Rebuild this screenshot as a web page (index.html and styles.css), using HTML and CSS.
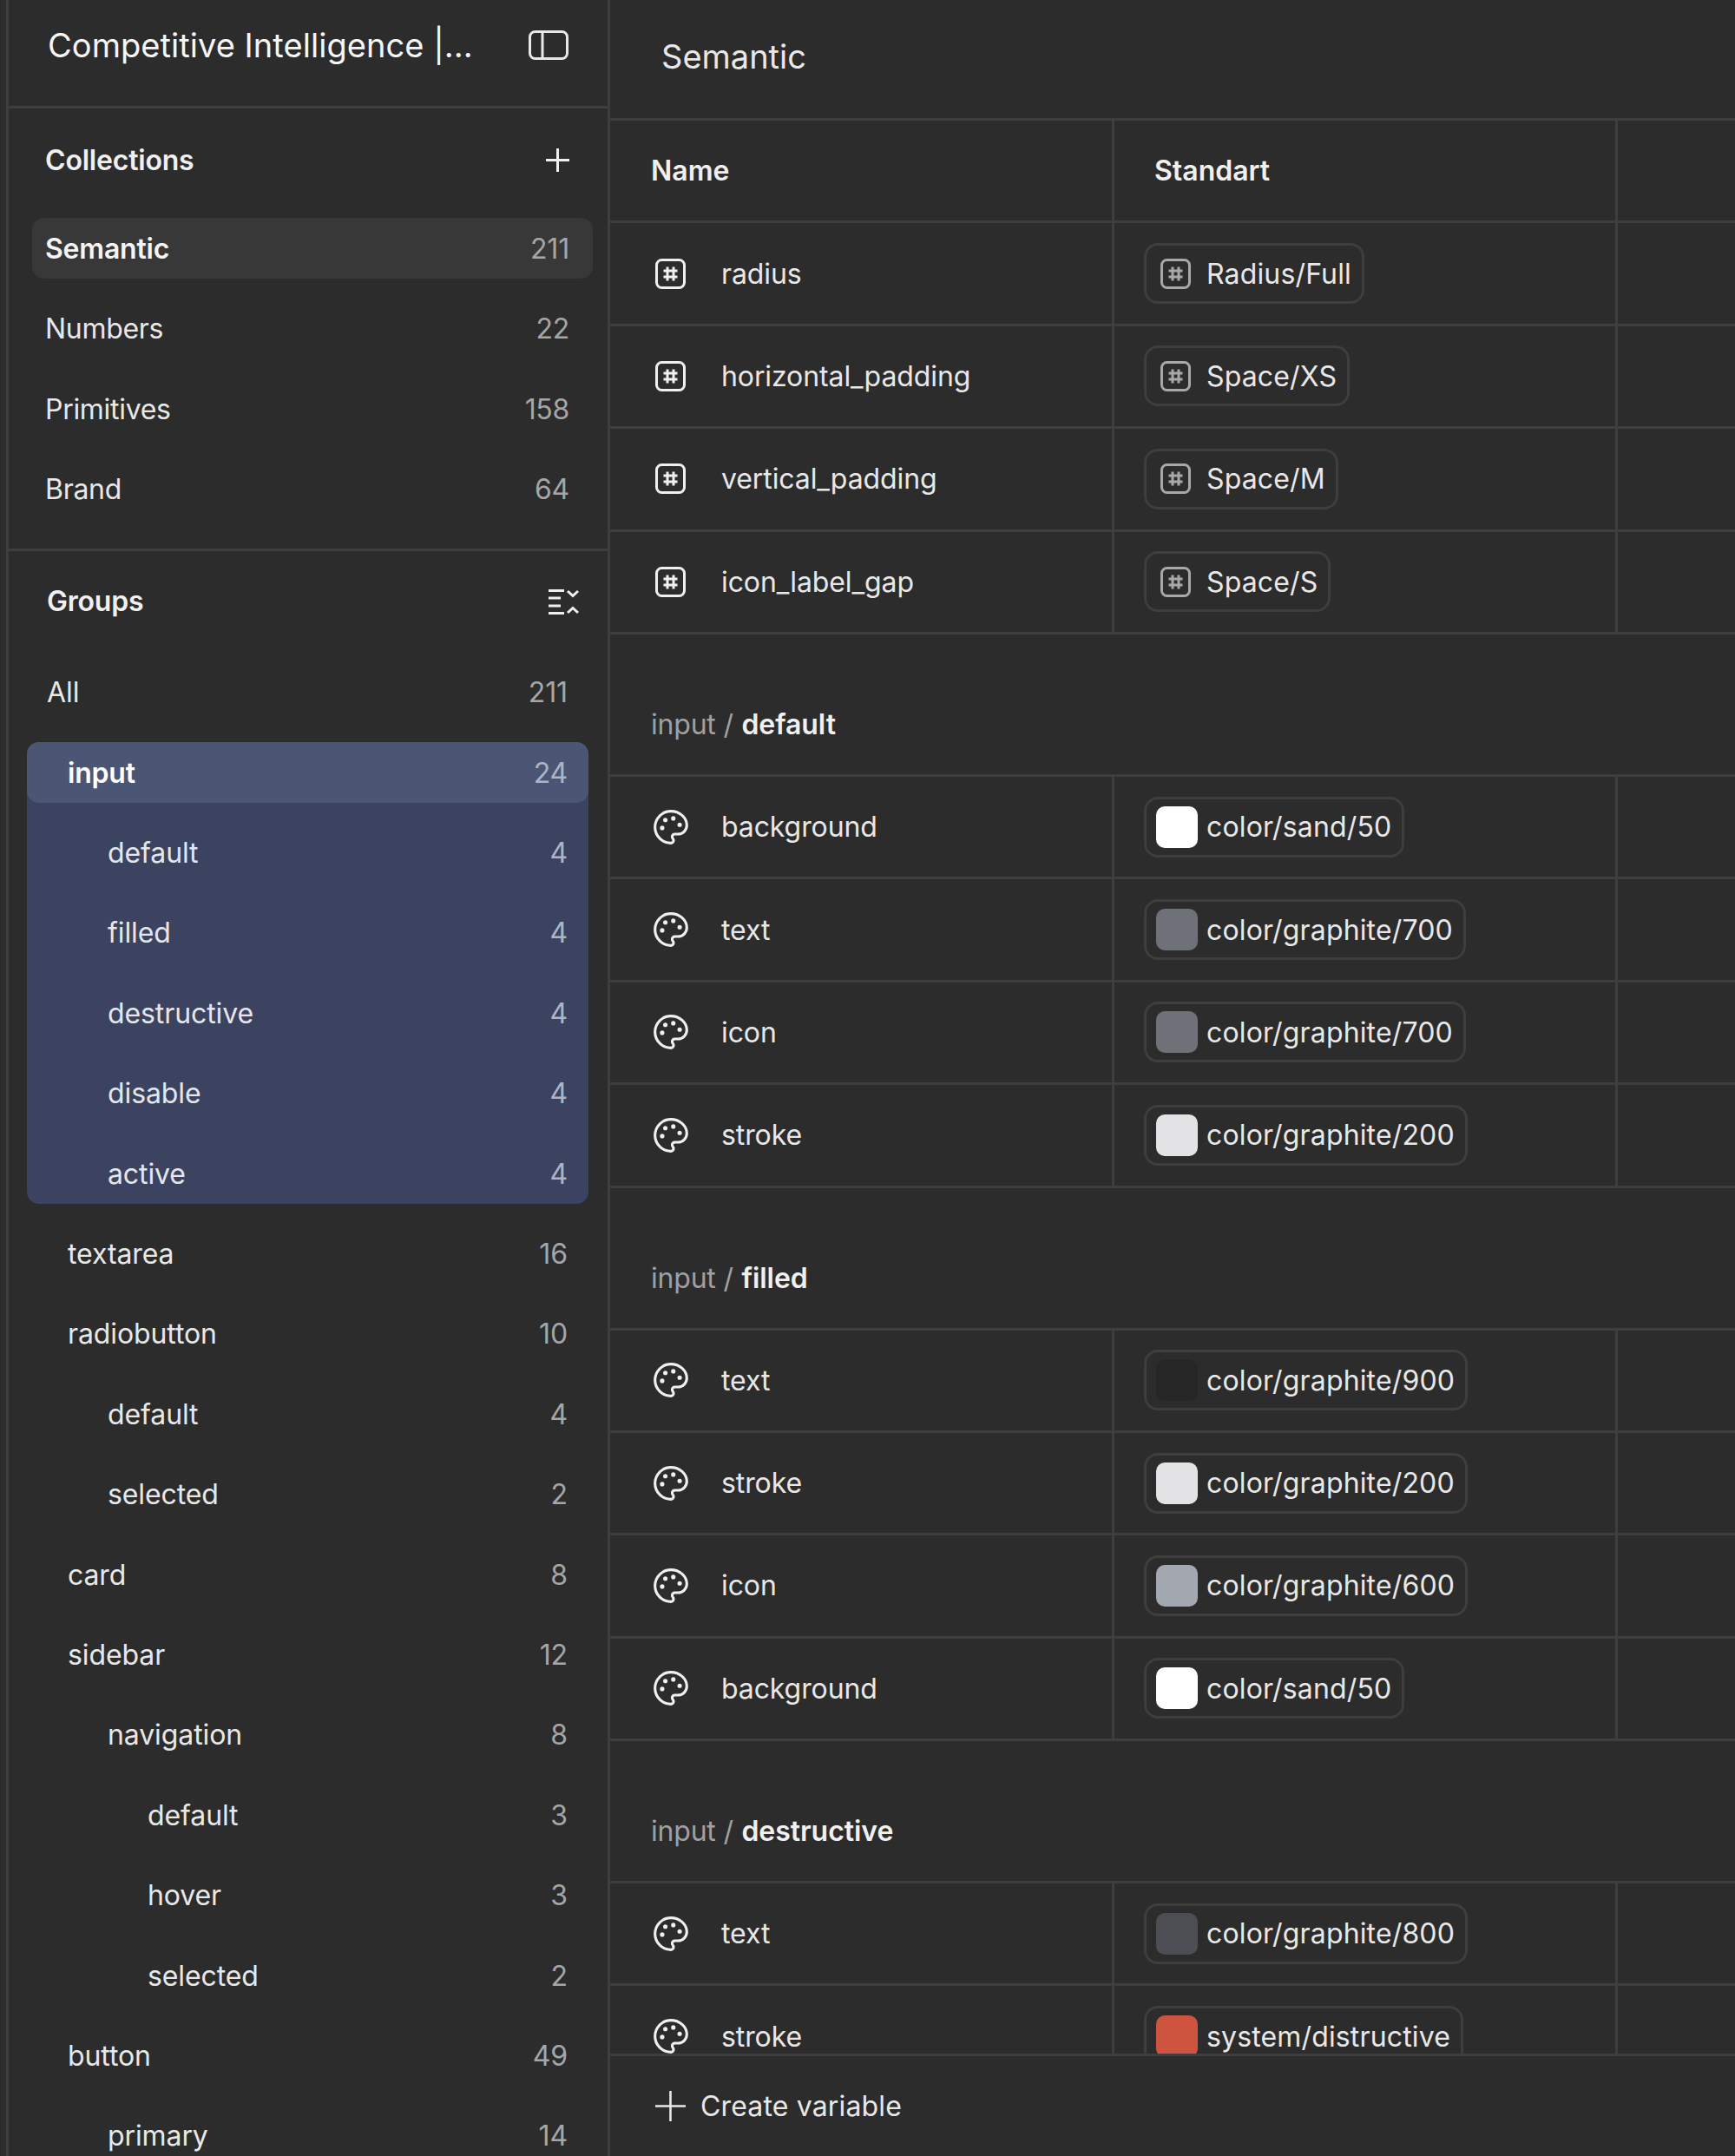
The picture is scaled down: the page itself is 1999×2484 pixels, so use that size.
FILE: index.html
```html
<!DOCTYPE html>
<html lang="en">
<head>
    <meta charset="UTF-8">
    <title>Variables</title>
    <link rel="stylesheet" href="styles.css">
</head>
<body>
    <svg class="defs" width="0" height="0">
        <symbol id="i-hash" viewBox="0 0 35 35">
            <rect x="1.5" y="1.5" width="32" height="32" rx="6" fill="none" stroke="currentColor" stroke-width="3"/>
            <path d="M14 9.500v16M21 9.500v16M9.500 14h16M9.500 21h16" fill="none" stroke="currentColor" stroke-width="3"/>
        </symbol>
        <symbol id="i-palette" viewBox="0 0 24 24">
            <path d="M12 2C6.5 2 2 6.5 2 12s4.5 10 10 10c.926 0 1.648-.746 1.648-1.688 0-.437-.18-.835-.437-1.125-.29-.289-.438-.652-.438-1.125a1.64 1.64 0 0 1 1.668-1.668h1.996c3.051 0 5.555-2.503 5.555-5.554C21.965 6.012 17.461 2 12 2z" fill="none" stroke="currentColor" stroke-width="1.7" stroke-linejoin="round"/>
            <circle cx="13.5" cy="6.5" r="1.4" fill="currentColor"/>
            <circle cx="17.5" cy="10.5" r="1.4" fill="currentColor"/>
            <circle cx="8.5" cy="7.5" r="1.4" fill="currentColor"/>
            <circle cx="6.5" cy="12.5" r="1.4" fill="currentColor"/>
        </symbol>
    </svg>

    <div class="app">
        <!-- sidebar -->
        <aside class="sidebar">
            <div class="file-head">
                <span class="file-title">Competitive Intelligence |...</span>
                <svg class="panel-icon" width="46" height="34" viewBox="0 0 46 34">
                    <rect x="1.5" y="1.5" width="43" height="31" rx="6" fill="none" stroke="currentColor" stroke-width="3"/>
                    <path d="M16 2v30" stroke="currentColor" stroke-width="3"/>
                </svg>
            </div>

            <section class="collections">
                <div class="side-head">
                    <span>Collections</span>
                    <svg width="27" height="27" viewBox="0 0 27 27"><path d="M13.5 0v27M0 13.5h27" stroke="currentColor" stroke-width="3"/></svg>
                </div>
                <div class="coll-list">
                    <div class="row selected"><span>Semantic</span><span class="count">211</span></div>
                    <div class="row"><span>Numbers</span><span class="count">22</span></div>
                    <div class="row"><span>Primitives</span><span class="count">158</span></div>
                    <div class="row"><span>Brand</span><span class="count">64</span></div>
                </div>
            </section>

            <section class="groups">
                <div class="side-head groups-head">
                    <span>Groups</span>
                    <svg width="35" height="30" viewBox="0 0 35 30">
                        <path d="M0 2.5h18M0 11h14M0 20h14M0 28.5h18" stroke="currentColor" stroke-width="3"/>
                        <path d="M22 3l6 5.500 6-5.500M22 28l6-5.500 6 5.500" fill="none" stroke="currentColor" stroke-width="3"/>
                    </svg>
                </div>
                <div class="group-list">
                    <div class="row lvl0"><span>All</span><span class="count">211</span></div>
                    <div class="group-active">
                        <div class="row lvl1 active-head"><span>input</span><span class="count">24</span></div>
                        <div class="row lvl2"><span>default</span><span class="count">4</span></div>
                        <div class="row lvl2"><span>filled</span><span class="count">4</span></div>
                        <div class="row lvl2"><span>destructive</span><span class="count">4</span></div>
                        <div class="row lvl2"><span>disable</span><span class="count">4</span></div>
                        <div class="row lvl2"><span>active</span><span class="count">4</span></div>
                    </div>
                    <div class="row lvl1"><span>textarea</span><span class="count">16</span></div>
                    <div class="row lvl1"><span>radiobutton</span><span class="count">10</span></div>
                    <div class="row lvl2"><span>default</span><span class="count">4</span></div>
                    <div class="row lvl2"><span>selected</span><span class="count">2</span></div>
                    <div class="row lvl1"><span>card</span><span class="count">8</span></div>
                    <div class="row lvl1"><span>sidebar</span><span class="count">12</span></div>
                    <div class="row lvl2"><span>navigation</span><span class="count">8</span></div>
                    <div class="row lvl3"><span>default</span><span class="count">3</span></div>
                    <div class="row lvl3"><span>hover</span><span class="count">3</span></div>
                    <div class="row lvl3"><span>selected</span><span class="count">2</span></div>
                    <div class="row lvl1"><span>button</span><span class="count">49</span></div>
                    <div class="row lvl2"><span>primary</span><span class="count">14</span></div>
                </div>
            </section>
        </aside>

        <!-- main table -->
        <main class="main">
            <div class="main-title">Semantic</div>

            <div class="table">
                <div class="tr th">
                    <div class="td">Name</div>
                    <div class="td">Standart</div>
                    <div class="td"></div>
                </div>
                <div class="tr">
                    <div class="td name"><svg class="var-icon hash"><use href="#i-hash"/></svg>radius</div>
                    <div class="td"><span class="pill"><svg class="pill-hash"><use href="#i-hash"/></svg>Radius/Full</span></div>
                    <div class="td"></div>
                </div>
                <div class="tr">
                    <div class="td name"><svg class="var-icon hash"><use href="#i-hash"/></svg>horizontal_padding</div>
                    <div class="td"><span class="pill"><svg class="pill-hash"><use href="#i-hash"/></svg>Space/XS</span></div>
                    <div class="td"></div>
                </div>
                <div class="tr">
                    <div class="td name"><svg class="var-icon hash"><use href="#i-hash"/></svg>vertical_padding</div>
                    <div class="td"><span class="pill"><svg class="pill-hash"><use href="#i-hash"/></svg>Space/M</span></div>
                    <div class="td"></div>
                </div>
                <div class="tr">
                    <div class="td name"><svg class="var-icon hash"><use href="#i-hash"/></svg>icon_label_gap</div>
                    <div class="td"><span class="pill"><svg class="pill-hash"><use href="#i-hash"/></svg>Space/S</span></div>
                    <div class="td"></div>
                </div>

                <div class="section-title">input / <b>default</b></div>
                <div class="tr">
                    <div class="td name"><svg class="var-icon"><use href="#i-palette"/></svg>background</div>
                    <div class="td"><span class="pill"><i class="swatch sand-50"></i>color/sand/50</span></div>
                    <div class="td"></div>
                </div>
                <div class="tr">
                    <div class="td name"><svg class="var-icon"><use href="#i-palette"/></svg>text</div>
                    <div class="td"><span class="pill"><i class="swatch graphite-700"></i>color/graphite/700</span></div>
                    <div class="td"></div>
                </div>
                <div class="tr">
                    <div class="td name"><svg class="var-icon"><use href="#i-palette"/></svg>icon</div>
                    <div class="td"><span class="pill"><i class="swatch graphite-700"></i>color/graphite/700</span></div>
                    <div class="td"></div>
                </div>
                <div class="tr">
                    <div class="td name"><svg class="var-icon"><use href="#i-palette"/></svg>stroke</div>
                    <div class="td"><span class="pill"><i class="swatch graphite-200"></i>color/graphite/200</span></div>
                    <div class="td"></div>
                </div>

                <div class="section-title">input / <b>filled</b></div>
                <div class="tr">
                    <div class="td name"><svg class="var-icon"><use href="#i-palette"/></svg>text</div>
                    <div class="td"><span class="pill"><i class="swatch graphite-900"></i>color/graphite/900</span></div>
                    <div class="td"></div>
                </div>
                <div class="tr">
                    <div class="td name"><svg class="var-icon"><use href="#i-palette"/></svg>stroke</div>
                    <div class="td"><span class="pill"><i class="swatch graphite-200"></i>color/graphite/200</span></div>
                    <div class="td"></div>
                </div>
                <div class="tr">
                    <div class="td name"><svg class="var-icon"><use href="#i-palette"/></svg>icon</div>
                    <div class="td"><span class="pill"><i class="swatch graphite-600"></i>color/graphite/600</span></div>
                    <div class="td"></div>
                </div>
                <div class="tr">
                    <div class="td name"><svg class="var-icon"><use href="#i-palette"/></svg>background</div>
                    <div class="td"><span class="pill"><i class="swatch sand-50"></i>color/sand/50</span></div>
                    <div class="td"></div>
                </div>

                <div class="section-title">input / <b>destructive</b></div>
                <div class="tr">
                    <div class="td name"><svg class="var-icon"><use href="#i-palette"/></svg>text</div>
                    <div class="td"><span class="pill"><i class="swatch graphite-800"></i>color/graphite/800</span></div>
                    <div class="td"></div>
                </div>
                <div class="tr">
                    <div class="td name"><svg class="var-icon"><use href="#i-palette"/></svg>stroke</div>
                    <div class="td"><span class="pill"><i class="swatch destructive"></i>system/distructive</span></div>
                    <div class="td"></div>
                </div>
            </div>

            <div class="create-bar">
                <svg width="35" height="35" viewBox="0 0 35 35"><path d="M17.5 0v35M0 17.500h35" stroke="currentColor" stroke-width="2.6"/></svg>
                Create variable
            </div>
        </main>
    </div>
</body>
</html>
```

FILE: styles.css
```css
* {
    box-sizing: border-box;
}
body {
    margin: 0;
    height: 2484px;
    overflow: hidden;
    background-color: #2c2c2c;
    color: #e8e8e8;
    font-family: Inter, "Liberation Sans", sans-serif;
    font-size: 32px;
}
.defs {
    position: absolute;
}
.app {
    display: flex;
    height: 2484px;
}

/* sidebar */
.sidebar {
    flex: 0 0 696px;
    margin-left: 7px;
    height: 2484px;
    overflow: hidden;
    border-left: 3px solid #3e3e3e;
    border-right: 3px solid #3e3e3e;
}
.file-head {
    display: flex;
    align-items: center;
    justify-content: space-between;
    height: 125px;
    padding: 0 45px 19px 45px;
    border-bottom: 3px solid #3e3e3e;
    font-size: 38px;
    color: #f6f6f6;
}
.file-title {
    letter-spacing: 0.05px;
}
.panel-icon {
    color: #e8e8e8;
}
.collections {
    padding: 0 17px 33px 27px;
    border-bottom: 3px solid #3e3e3e;
}
.side-head {
    display: flex;
    align-items: center;
    justify-content: space-between;
    height: 118px;
    padding: 0 27px 0 15px;
    font-weight: 600;
    letter-spacing: -0.2px;
    color: #f0f0f0;
}
.coll-list {
    display: flex;
    flex-direction: column;
    gap: 22.6px;
    padding-top: 8px;
    letter-spacing: -0.3px;
}
.row {
    display: flex;
    align-items: center;
    justify-content: space-between;
    height: 70px;
    padding: 0 27px 0 15px;
    border-radius: 14px;
}
.count {
    color: #a6a6a6;
}
.selected {
    background-color: #383838;
    font-weight: 600;
    letter-spacing: -0.2px;
    color: #f4f4f4;
}
.selected .count {
    font-weight: 400;
}
.groups-head {
    height: 116px;
    padding: 0 33px 0 44px;
    margin-bottom: 12px;
}
.group-list {
    display: flex;
    flex-direction: column;
    gap: 22.4px;
    padding: 0 22px 0 21px;
    letter-spacing: -0.1px;
}
.group-list .row {
    padding-right: 24px;
}
.group-list .lvl0 {
    padding-left: 23px;
}
.group-list .lvl1 {
    padding-left: 47px;
}
.group-list .lvl2 {
    padding-left: 93px;
}
.group-list .lvl3 {
    padding-left: 139px;
}
.group-active {
    display: flex;
    flex-direction: column;
    gap: 22.4px;
    background-color: #3b4360;
    border-radius: 14px;
}
.group-active .row {
    color: #e4e6ee;
}
.group-active .count {
    color: #aeb4c6;
}
.group-active .active-head {
    background-color: #4b5675;
    font-weight: 600;
    letter-spacing: -0.2px;
    color: #fff;
}
.active-head .count {
    font-weight: 400;
}

/* main */
.main {
    flex: 1;
    display: flex;
    flex-direction: column;
    min-width: 0;
    height: 2484px;
}
.main-title {
    flex: 0 0 139px;
    padding: 44px 0 0 59px;
    border-bottom: 3px solid #3e3e3e;
    font-size: 38px;
    line-height: 42px;
}
.table {
    flex: 1;
    overflow: hidden;
}
.tr {
    display: grid;
    grid-template-columns: 581px 580px 1fr;
    height: 118.4px;
    border-bottom: 3px solid #3e3e3e;
}
.td {
    display: flex;
    align-items: center;
    padding-left: 47px;
    border-right: 3px solid #3e3e3e;
}
.td:last-child {
    border-right: none;
}
.th .td {
    font-weight: 600;
    color: #f0f0f0;
}
.name {
    letter-spacing: -0.1px;
}
.tr .name {
    padding-left: 48px;
}
.var-icon {
    flex: none;
    width: 44px;
    height: 44px;
    margin-right: 36px;
    color: #f0f0f0;
}
.var-icon.hash {
    width: 35px;
    height: 35px;
    margin-left: 4px;
    margin-right: 41px;
}
.tr .td:nth-child(2) {
    padding-left: 34px;
}
.th .td:nth-child(2) {
    padding-left: 46px;
}
.pill {
    display: inline-flex;
    align-items: center;
    height: 70px;
    padding: 0 12px 0 8px;
    border: 3px solid #3e3e3e;
    border-radius: 16px;
    letter-spacing: 0.15px;
}
.swatch {
    width: 48px;
    height: 48px;
    margin: 0 10px 0 3px;
    border-radius: 10px;
}
.pill-hash {
    width: 35px;
    height: 35px;
    margin: 0 18px 0 8px;
    color: #a8a8a8;
}
.sand-50 { background-color: #fff; }
.graphite-200 { background-color: #e3e3e5; }
.graphite-600 { background-color: #a3a7b0; }
.graphite-700 { background-color: #6e7178; }
.graphite-800 { background-color: #4c4e54; }
.graphite-900 { background-color: #262626; }
.destructive { background-color: #cf5440; }

.section-title {
    display: flex;
    align-items: center;
    gap: 0.3em;
    height: 164px;
    padding: 46px 0 0 47px;
    border-bottom: 3px solid #3e3e3e;
    letter-spacing: -0.2px;
    color: #a0a0a0;
}
.section-title b {
    font-weight: 600;
    letter-spacing: -0.05px;
    color: #f0f0f0;
}
.create-bar {
    flex: 0 0 118px;
    display: flex;
    align-items: center;
    gap: 17px;
    padding-left: 52px;
    border-top: 3px solid #3e3e3e;
    letter-spacing: 0.15px;
    background-color: #2c2c2c;
}
```
